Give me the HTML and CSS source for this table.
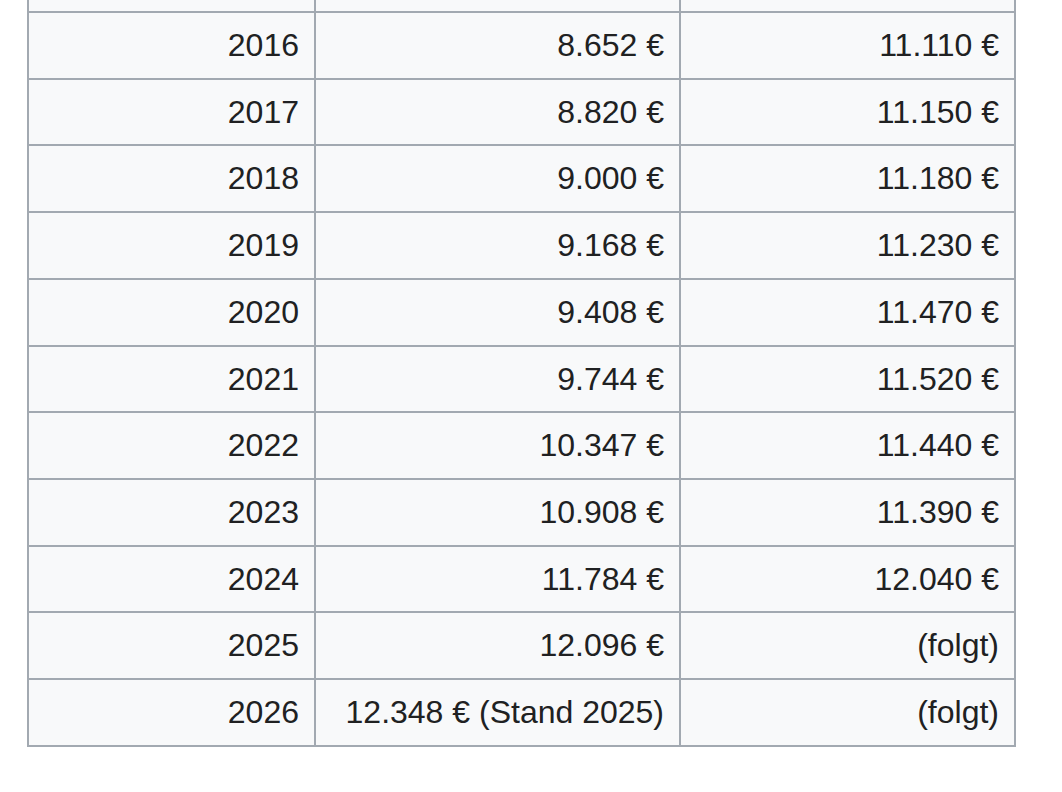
FILE: index.html
```html
<!DOCTYPE html>
<html lang="de">
<head>
<meta charset="utf-8">
<title>Tabelle</title>
<link rel="stylesheet" href="styles.css">
</head>
<body>
<table class="wikitable">
<colgroup>
<col class="c1"><col class="c2"><col class="c3">
</colgroup>
<tbody>
<tr class="cut"><td>&nbsp;</td><td>&nbsp;</td><td>&nbsp;</td></tr>
<tr><td>2016</td><td>8.652 €</td><td>11.110 €</td></tr>
<tr><td>2017</td><td>8.820 €</td><td>11.150 €</td></tr>
<tr><td>2018</td><td>9.000 €</td><td>11.180 €</td></tr>
<tr><td>2019</td><td>9.168 €</td><td>11.230 €</td></tr>
<tr><td>2020</td><td>9.408 €</td><td>11.470 €</td></tr>
<tr><td>2021</td><td>9.744 €</td><td>11.520 €</td></tr>
<tr><td>2022</td><td>10.347 €</td><td>11.440 €</td></tr>
<tr><td>2023</td><td>10.908 €</td><td>11.390 €</td></tr>
<tr><td>2024</td><td>11.784 €</td><td>12.040 €</td></tr>
<tr><td>2025</td><td>12.096 €</td><td>(folgt)</td></tr>
<tr><td>2026</td><td>12.348 € (Stand 2025)</td><td>(folgt)</td></tr>
</tbody>
</table>
</body>
</html>
```
FILE: styles.css
```css
html, body {
  margin: 0;
  padding: 0;
  background: #ffffff;
}
body {
  font-family: "Liberation Sans", Arial, sans-serif;
  color: #202122;
}
.wikitable {
  margin: -55.7px 0 0 27px;
  border-collapse: collapse;
  table-layout: fixed;
  width: 989px;
  background: #f8f9fa;
  border: 2px solid #a2a9b1;
  font-size: 32px;
}
.wikitable .c1 { width: 287px; }
.wikitable .c2 { width: 365px; }
.wikitable .c3 { width: 335px; }
.wikitable td {
  border: 2px solid #a2a9b1;
  padding: 10px 15px 10px 10px;
  line-height: 44.7px;
  text-align: right;
  white-space: nowrap;
}
```
